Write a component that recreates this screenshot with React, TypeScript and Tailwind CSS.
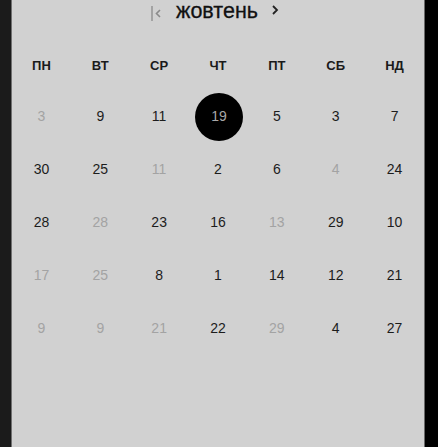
const weekdays = ["пн", "вт", "ср", "чт", "пт", "сб", "нд"];

type Day = { n: number; dim?: boolean; selected?: boolean };

const weeks: Day[][] = [
  [{ n: 3, dim: true }, { n: 9 }, { n: 11 }, { n: 19, selected: true }, { n: 5 }, { n: 3 }, { n: 7 }],
  [{ n: 30 }, { n: 25 }, { n: 11, dim: true }, { n: 2 }, { n: 6 }, { n: 4, dim: true }, { n: 24 }],
  [{ n: 28 }, { n: 28, dim: true }, { n: 23 }, { n: 16 }, { n: 13, dim: true }, { n: 29 }, { n: 10 }],
  [{ n: 17, dim: true }, { n: 25, dim: true }, { n: 8 }, { n: 1 }, { n: 14 }, { n: 12 }, { n: 21 }],
  [{ n: 9, dim: true }, { n: 9, dim: true }, { n: 21, dim: true }, { n: 22 }, { n: 29, dim: true }, { n: 4 }, { n: 27 }],
];

const App = () => {
  return (
    <div className="flex h-[447px] w-[438px] overflow-hidden font-['Liberation_Sans',Arial,sans-serif]">
      <div className="w-[12px] shrink-0 bg-[#1b1b1b] border-r border-[#707070]" />

      <div className="flex-1 bg-[#d1d1d1]">
        {/* month header */}
        <div className="flex h-[25px] items-center justify-center mb-[16px] pr-[6px]">
          <svg width="11" height="18" viewBox="0 0 11 18" className="mr-[14px]">
            <path d="M1 2v15" stroke="#8a8a8a" strokeWidth="1.3" fill="none" />
            <path d="M9 6l-3.5 3.5L9 13" stroke="#8a8a8a" strokeWidth="1.6" fill="none" />
          </svg>
          <span className="text-[21.5px] leading-none text-[#111] pb-[2px] [-webkit-text-stroke:0.3px_#111]">
            жовтень
          </span>
          <svg width="8" height="14" viewBox="0 0 8 14" className="ml-[13px] mb-[6px]">
            <path d="M2 3l4 4-4 4" stroke="#222" strokeWidth="1.8" fill="none" />
          </svg>
        </div>

        {/* weekdays */}
        <div className="grid grid-cols-7 h-[49px] items-center">
          {weekdays.map((d) => (
            <div key={d} className="text-center text-[13px] font-bold uppercase text-[#1a1a1a]">
              {d}
            </div>
          ))}
        </div>

        {/* days */}
        {weeks.map((week, wi) => (
          <div key={wi} className="grid grid-cols-7 h-[53px] items-center">
            {week.map((day, di) =>
              day.selected ? (
                <div key={di} className="flex justify-center">
                  <div className="flex h-[48px] w-[48px] items-center justify-center rounded-full bg-black text-[14px] text-[#a8a8a8] translate-x-[1px]">
                    {day.n}
                  </div>
                </div>
              ) : (
                <div
                  key={di}
                  className={
                    "text-center text-[14px] " +
                    (day.dim ? "text-[#a3a3a3]" : "text-[#1c1c1c]")
                  }
                >
                  {day.n}
                </div>
              ),
            )}
          </div>
        ))}
      </div>

      <div className="w-[14px] shrink-0 bg-black border-l border-[#6a6a6a]" />
    </div>
  );
};

export default App;
